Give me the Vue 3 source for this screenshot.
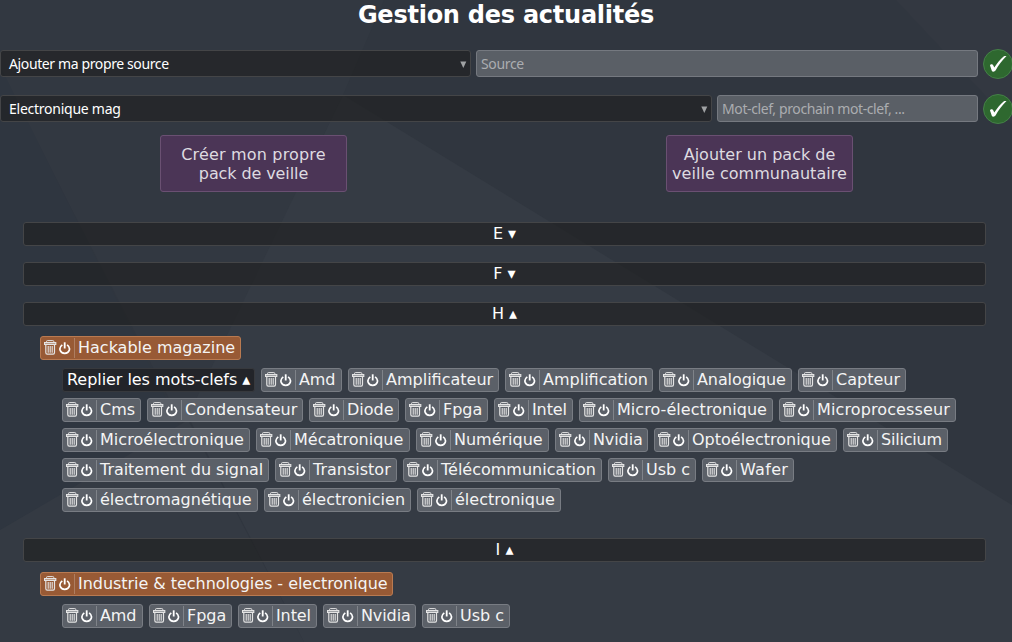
<script setup>
const packs = [
  [
    { text: 'Créer mon propre', spacing: 0.17 },
    { text: 'pack de veille', spacing: -0.1 },
  ],
  [
    { text: 'Ajouter un pack de', spacing: 0 },
    { text: 'veille communautaire', spacing: 0.03 },
  ],
]

// Each tag: label, tag width, letter spacing
const groups = [
  { letter: 'E', open: false },
  { letter: 'F', open: false },
  {
    letter: 'H',
    open: true,
    source: ['Hackable magazine', 201, 0],
    foldable: true,
    keywords: [
      ['Amd', 81, -0.1], ['Amplificateur', 151, 0], ['Amplification', 148, 0],
      ['Analogique', 133, -0.1], ['Capteur', 108, 0], ['Cms', 79, 0],
      ['Condensateur', 156, 0], ['Diode', 90, 0], ['Fpga', 83, 0],
      ['Intel', 79, -0.1], ['Micro-électronique', 194, 0.05],
      ['Microprocesseur', 177, 0.12], ['Microélectronique', 188, 0.06],
      ['Mécatronique', 154, 0], ['Numérique', 133, 0], ['Nvidia', 93, -0.1],
      ['Optoélectronique', 183, 0], ['Silicium', 105, -0.2],
      ['Traitement du signal', 207, -0.04], ['Transistor', 122, 0],
      ['Télécommunication', 199, 0], ['Usb c', 88, 0], ['Wafer', 92, 0.3],
      ['électromagnétique', 196, 0], ['électronicien', 147, 0],
      ['électronique', 144, 0],
    ],
  },
  {
    letter: 'I',
    open: true,
    source: ['Industrie & technologies - electronique', 353, -0.04],
    foldable: false,
    keywords: [
      ['Amd', 81, -0.1], ['Fpga', 83, 0], ['Intel', 79, -0.1],
      ['Nvidia', 93, -0.1], ['Usb c', 88, 0],
    ],
  },
]
</script>

<template>
  <div class="page">
    <svg class="facets" viewBox="0 0 1012 642" preserveAspectRatio="none">
      <rect width="1012" height="642" fill="#30363f" />
      <polygon points="0,0 384,0 343,95 190,416 178,416 0,70" fill="#323841" />
      <polygon points="0,66 180,427 0,530" fill="#2f3640" />
      <polygon points="343,95 1012,505 1012,642 304,642 188,416" fill="#353b44" />
      <polygon points="0,530 188,420 304,642 0,642" fill="#343a43" />
      <polygon points="896,0 1012,0 1012,124" fill="#333841" />
    </svg>

    <svg class="defs" width="0" height="0">
      <symbol id="trash" viewBox="0 0 13 15">
        <g fill="none" stroke="currentColor">
          <path d="M2.5 2.2V1.5Q2.5 .6 3.5 .6H8.8Q9.8 .6 9.8 1.5V2.2" />
          <path d="M.5 4.4V2.6H11.8V4.4Z" stroke-width="1.1" />
          <path d="M1.8 4.6V12.6Q1.8 14.2 3.2 14.2H9.1Q10.5 14.2 10.5 12.6V4.6" stroke-width="1.2" />
          <path d="M4.2 6V12.7M6.2 6V12.7M8.2 6V12.7" stroke-width="1.1" />
        </g>
      </symbol>
      <symbol id="power" viewBox="0 0 12 13">
        <g fill="none" stroke="currentColor">
          <path d="M3.3 2.9C-1 6 1 11.4 5.7 11.4S12.400 6 8.100 2.900" stroke-width="1.7" />
          <path d="M5.700 .3V6.500" stroke-width="1.800" />
        </g>
      </symbol>
      <symbol id="check" viewBox="0 0 30 30">
        <path d="M7 16.6C7.200 15.100 9.600 14.600 10.200 16.200L11.300 18.600C14.400 13.700 17.300 10 20.600 7.400C21.500 6.900 22.600 6.900 23.500 7.100C18.900 11.700 15.400 16.500 12.700 21.300C11.900 22.800 9.500 23.200 8.900 21.900Z" fill="#fff" />
      </symbol>
    </svg>

    <h1>Gestion des actualités</h1>

    <div class="row">
      <div class="select narrow">
        <span class="s1">Ajouter ma propre source</span>
        <svg width="7" height="8" viewBox="0 0 7 8"><path d="M.3 .5H6.3L3.3 7Z" fill="#a0a2a4" /></svg>
      </div>
      <div class="input"><span class="s2">Source</span></div>
      <button class="ok"><svg width="30" height="30"><use href="#check" /></svg></button>
    </div>
    <div class="row">
      <div class="select wide">
        <span class="s3">Electronique mag</span>
        <svg width="7" height="8" viewBox="0 0 7 8"><path d="M.3 .5H6.3L3.3 7Z" fill="#a0a2a4" /></svg>
      </div>
      <div class="input"><span class="s4">Mot-clef, prochain mot-clef, ...</span></div>
      <button class="ok"><svg width="30" height="30"><use href="#check" /></svg></button>
    </div>

    <div class="packs">
      <div v-for="(p, i) in packs" :key="i" class="cell">
        <button class="pack">
          <span v-for="l in p" :key="l.text" class="line" :style="{ letterSpacing: l.spacing ? l.spacing + 'px' : null }">{{ l.text }}</span>
        </button>
      </div>
    </div>

    <section v-for="g in groups" :key="g.letter" class="group">
      <div class="bar">{{ g.letter }} {{ g.open ? '▴' : '▾' }}</div>
      <template v-if="g.open">
        <div class="chip source" :style="{ width: g.source[1] + 'px' }">
          <svg class="trash" width="13" height="15"><use href="#trash" /></svg>
          <svg class="power" width="12" height="13"><use href="#power" /></svg>
          <span class="label" :style="{ letterSpacing: g.source[2] ? g.source[2] + 'px' : null }">{{ g.source[0] }}</span>
        </div>
        <div class="keywords">
          <div v-if="g.foldable" class="fold">Replier les mots-clefs ▴</div>
          <div v-for="k in g.keywords" :key="k[0]" class="chip" :style="{ width: k[1] + 'px' }">
            <svg class="trash" width="13" height="15"><use href="#trash" /></svg>
            <svg class="power" width="12" height="13"><use href="#power" /></svg>
            <span class="label" :style="{ letterSpacing: k[2] ? k[2] + 'px' : null }">{{ k[0] }}</span>
          </div>
        </div>
      </template>
    </section>
  </div>
</template>

<style>
body {
  background: #30363f;
  overflow: hidden;
}
</style>

<style scoped>
.page {
  position: relative;
  width: 1012px;
  height: 642px;
  overflow: hidden;
  font: 16px/19px "DejaVu Sans", sans-serif;
  color: #f4f4f4;
}
.page * {
  box-sizing: border-box;
}
.facets {
  position: absolute;
  inset: 0;
  width: 1012px;
  height: 642px;
  z-index: -1;
}
.defs {
  position: absolute;
}
h1 {
  margin: 0 0 20px;
  height: 29px;
  padding-top: 1px;
  font-size: 24px;
  line-height: 29px;
  letter-spacing: -0.25px;
  text-align: center;
  color: #fff;
}
.row {
  display: flex;
  align-items: flex-start;
  width: 1013px;
  height: 30px;
  gap: 5px;
  margin-bottom: 15px;
}
.select,
.input {
  display: flex;
  align-items: center;
  justify-content: space-between;
  height: 27px;
  margin-top: 1px;
  border-radius: 3px;
  font-family: "Noto Sans", sans-serif;
  font-size: 14px;
  white-space: nowrap;
}
.select {
  padding: 0 3px 0 8px;
  border: 1px solid #444547;
  background: rgba(30, 30, 30, 0.6);
  color: #fff;
}
.select svg {
  margin-top: 2px;
}
.narrow {
  width: 471px;
}
.wide {
  width: 712px;
}
.input {
  flex: 1;
  padding: 0 4px;
  border: 1px solid #757980;
  background: #5a5f66;
  color: #abadb0;
}
.s1 {
  letter-spacing: -0.38px;
}
.s2 {
  letter-spacing: -0.35px;
}
.s3 {
  letter-spacing: -0.25px;
}
.s4 {
  letter-spacing: -0.39px;
}
.ok {
  width: 30px;
  height: 30px;
  padding: 0;
  border: 1px solid #458048;
  border-radius: 50%;
  background: #2e682f;
}
.ok svg {
  display: block;
  margin: -1px;
}
.packs {
  display: flex;
  margin: -4px 0 30px;
}
.cell {
  width: 506px;
  display: flex;
  justify-content: center;
  padding-left: 1px;
}
.pack {
  width: 187px;
  height: 57px;
  padding: 0;
  border: 1px solid #6a5072;
  border-radius: 3px;
  background: #4b3556;
  color: #dedbe0;
  font: inherit;
  white-space: nowrap;
}
.line {
  display: block;
}
.group {
  margin: 0 26px 16px 23px;
}
.bar {
  height: 24px;
  border: 1px solid #444547;
  border-radius: 3px;
  background: rgba(30, 30, 30, 0.6);
  line-height: 21px;
  text-align: center;
  color: #fff;
}
.chip {
  display: flex;
  align-items: center;
  height: 24px;
  padding-left: 3px;
  border: 1px solid #787c83;
  border-radius: 3px;
  background: #5b6068;
  white-space: nowrap;
}
.chip svg {
  flex: none;
}
.source {
  margin: 10px 0 8px 17px;
  border-color: #b97a51;
  background: #985a35;
}
.trash {
  margin-top: -1px;
  color: #e4e4e4;
}
.power {
  margin-left: 2px;
  color: #fff;
}
.label {
  height: 20px;
  margin-left: 3px;
  padding-left: 3px;
  border-left: 1px solid rgba(255, 255, 255, 0.22);
  line-height: 19px;
}
.keywords {
  display: flex;
  flex-wrap: wrap;
  gap: 6px;
  margin: 0 0 26px 39px;
}
.fold {
  width: 193px;
  height: 24px;
  padding: 0 4px;
  border: 1px solid #37393d;
  border-radius: 3px;
  background: #222429;
  line-height: 21px;
  letter-spacing: -0.05px;
  white-space: nowrap;
  color: #fff;
}
</style>
